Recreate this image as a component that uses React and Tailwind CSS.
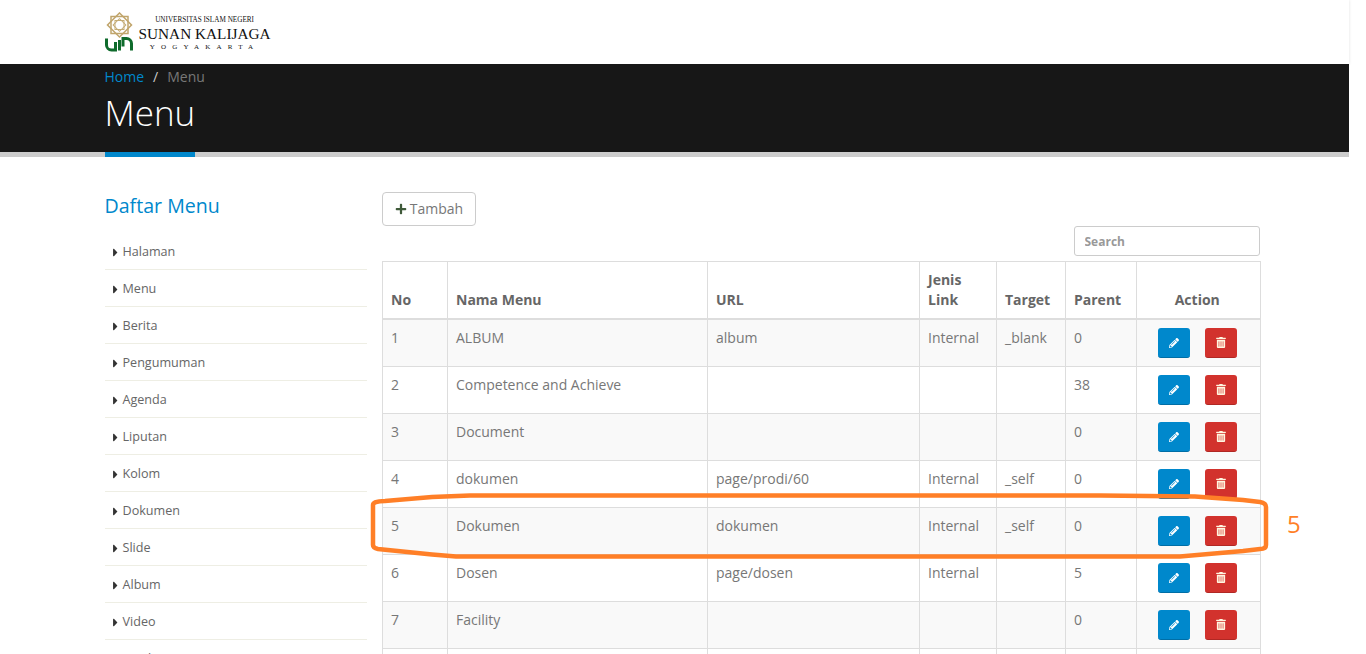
import React from 'react'
import { FaCaretRight, FaPencilAlt, FaPlus, FaTrashAlt } from 'react-icons/fa'

const sidebarItems = ['Halaman', 'Menu', 'Berita', 'Pengumuman', 'Agenda', 'Liputan', 'Kolom', 'Dokumen', 'Slide', 'Album', 'Video', 'Sambutan']

const rows = [
  { id: 1, no: 1, name: 'ALBUM', url: 'album', jenis: 'Internal', target: '_blank', parent: 0 },
  { id: 2, no: 2, name: 'Competence and Achieve', url: '', jenis: '', target: '', parent: 38 },
  { id: 3, no: 3, name: 'Document', url: '', jenis: '', target: '', parent: 0 },
  { id: 4, no: 4, name: 'dokumen', url: 'page/prodi/60', jenis: 'Internal', target: '_self', parent: 0 },
  { id: 5, no: 5, name: 'Dokumen', url: 'dokumen', jenis: 'Internal', target: '_self', parent: 0 },
  { id: 6, no: 6, name: 'Dosen', url: 'page/dosen', jenis: 'Internal', target: '', parent: 5 },
  { id: 7, no: 7, name: 'Facility', url: '', jenis: '', target: '', parent: 0 },
  { id: 8, no: '', name: '', url: '', jenis: '', target: '', parent: '' },
]

const thCls = 'border border-[#ddd] border-b-2 px-2 py-2 align-bottom text-sm font-bold leading-5 text-[#666]'
const tdCls = 'border border-[#ddd] px-2 py-2 align-top text-sm leading-5 text-[#777]'

function Logo() {
  return (
    <div className="flex h-16 items-start">
      <svg width="28" height="40" viewBox="0 0 28 40" className="mt-[12px] shrink-0">
        <g fill="none" stroke="#c0a56c" strokeWidth="1.500">
          <rect x="6" y="4.500" width="17" height="17" />
          <rect x="6" y="4.500" width="17" height="17" transform="rotate(45 14.500 13)" />
        </g>
        <g fill="none" stroke="#c4ab74" strokeWidth="1">
          <rect x="10" y="8.500" width="9" height="9" />
          <rect x="10" y="8.500" width="9" height="9" transform="rotate(45 14.500 13)" />
        </g>
        <g fill="none" stroke="#0f6b2c" strokeWidth="3">
          <path d="M1.500 26.500v6.500a5 5 0 0 0 5 5h4v-8" />
          <path d="M14.500 28v10.500" />
          <path d="M26.500 38.500v-7a5 5 0 0 0-5-5h-3.500v8" />
        </g>
      </svg>
      <div className="ml-[6px] mt-[14px] flex flex-col items-center font-['Liberation_Serif',serif] text-[#111]">
        <span className="text-[7.200px] leading-[12px]">UNIVERSITAS ISLAM NEGERI</span>
        <span className="whitespace-nowrap text-[15.300px] leading-[15px]">SUNAN KALIJAGA</span>
        <span className="mt-[2px] text-[7px] leading-[9px] tracking-[6.200px]">YOGYAKARTA</span>
      </div>
    </div>
  )
}

function App() {
  return (
    <div className="relative flex h-[654px] w-full overflow-hidden bg-white font-['Open_Sans',sans-serif]">
      <div className="w-[1349px] shrink-0">
        {/* top logo bar */}
        <header className="h-16 bg-white shadow-[0_0_3px_rgba(0,0,0,0.12)]">
          <div className="mx-auto w-[1170px] px-[15px]">
            <Logo />
          </div>
        </header>

        {/* page title */}
        <section className="h-[93px] border-b-[5px] border-[#ccc] bg-[#171717]">
          <div className="mx-auto w-[1170px] px-[15px] pt-[3px]">
            <div className="text-sm leading-5 text-[#777]">
              <a className="text-[#0088cc]">Home</a>
              <span className="mx-[9px] text-[#ccc]">/</span>
              <span>Menu</span>
            </div>
            <h1 className="inline-block h-[70px] border-b-[5px] border-[#0088cc] text-[35px] leading-[52px] font-light text-white">Menu</h1>
          </div>
        </section>

        <div className="mx-auto flex w-[1170px] px-[15px]">
          {/* sidebar */}
          <aside className="w-[262px] shrink-0 pt-[35px]">
            <h4 className="text-[19.600px] leading-[27px] font-normal text-[#0088cc]">Daftar Menu</h4>
            <ul className="mt-[14px]">
              {sidebarItems.map((item) => (
                <li key={item} className="flex h-[37px] items-center border-b border-[#eeeee4] pl-2 pt-[2px] text-[12.600px] text-[#666]">
                  <FaCaretRight className="mr-[5px] h-[13px] w-[5px] text-[#333]" />
                  {item}
                </li>
              ))}
            </ul>
          </aside>

          {/* table */}
          <main className="ml-[15.500px] w-[877.500px] shrink-0 pt-[35px]">
            <button type="button" className="flex h-[34px] w-[94px] items-center justify-center gap-[3px] rounded border border-[#ccc] bg-white text-sm text-[#777]">
              <FaPlus className="h-3 w-3 text-[#3f5a3a]" />
              Tambah
            </button>
            <div className="flex justify-end">
              <input
                placeholder="Search"
                className="h-[30px] w-[186px] rounded-[3px] border border-[#ccc] px-[10px] text-xs font-bold text-[#777] placeholder:text-[#999] focus:outline-none"
              />
            </div>
            <table className="mt-[5px] w-[877.500px] table-fixed border-collapse">
              <colgroup>
                <col className="w-[65px]" />
                <col className="w-[260px]" />
                <col className="w-[212px]" />
                <col className="w-[77px]" />
                <col className="w-[69px]" />
                <col className="w-[71px]" />
                <col className="w-[123.500px]" />
              </colgroup>
              <thead>
                <tr className="h-[57px]">
                  <th className={`${thCls} text-left`}>No</th>
                  <th className={`${thCls} text-left`}>Nama Menu</th>
                  <th className={`${thCls} text-left`}>URL</th>
                  <th className={`${thCls} text-left`}>Jenis Link</th>
                  <th className={`${thCls} text-left`}>Target</th>
                  <th className={`${thCls} text-left`}>Parent</th>
                  <th className={`${thCls} pr-[10px] text-center`}>Action</th>
                </tr>
              </thead>
              <tbody>
                {rows.map((row) => (
                  <tr key={row.id} className={`h-[47px] ${row.id % 2 === 1 ? 'bg-[#f9f9f9]' : 'bg-white'}`}>
                    <td className={tdCls}>{row.no}</td>
                    <td className={tdCls}>{row.name}</td>
                    <td className={tdCls}>{row.url}</td>
                    <td className={tdCls}>{row.jenis}</td>
                    <td className={tdCls}>{row.target}</td>
                    <td className={tdCls}>{row.parent}</td>
                    <td className={tdCls}>
                      <div className="flex justify-center gap-[15px] pr-px">
                        <button type="button" className="flex h-[30px] w-8 items-center justify-center rounded-[3px] border-b border-[#006ea6] bg-[#0088cc] text-white">
                          <FaPencilAlt className="h-[10px] w-[10px]" />
                        </button>
                        <button type="button" className="flex h-[30px] w-8 items-center justify-center rounded-[3px] border-b border-[#b02824] bg-[#d2322d] text-[#fff6e0]">
                          <FaTrashAlt className="h-[11px] w-[10px]" />
                        </button>
                      </div>
                    </td>
                  </tr>
                ))}
              </tbody>
            </table>
          </main>
        </div>
      </div>

      {/* hand drawn annotation on top of row 5 */}
      <svg width="1366" height="654" className="pointer-events-none absolute inset-0">
        <path
          d="M373 505 L373 545 Q373 548 378 549 L432 554.500 L456 556.500 L1180 556.500 L1243 551 L1260 549 Q1266 549 1266 545 L1266 507 Q1266 503 1260 502 L1243 500 L1195 496.500 L1100 495.500 L470 495.500 L432 497 L385 501 Q373 501 373 505 Z"
          fill="none"
          stroke="#ff7f27"
          strokeWidth="4.500"
        />
      </svg>
      <span className="absolute left-[1287px] top-[507px] text-[24px] leading-[33px] text-[#ff7f27]">5</span>
    </div>
  )
}

export default App
